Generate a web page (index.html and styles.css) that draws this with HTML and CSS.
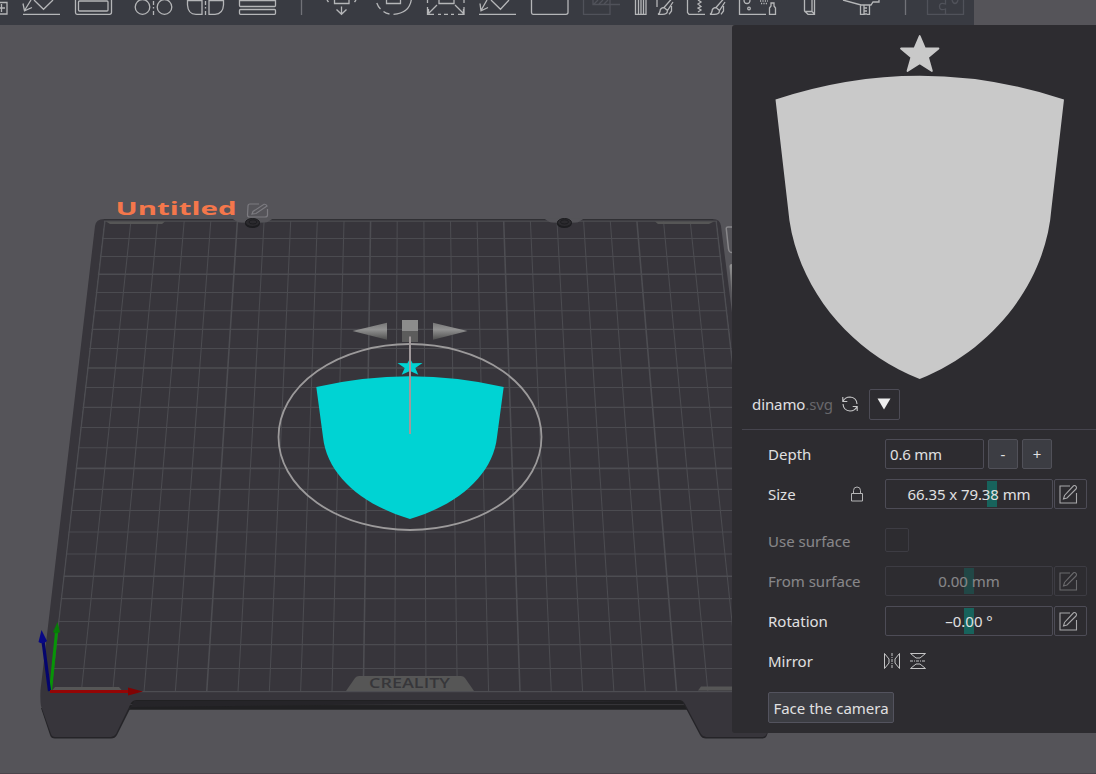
FILE: index.html
```html
<!DOCTYPE html>
<html lang="en">
<head>
<meta charset="utf-8">
<title>Untitled</title>
<link rel="stylesheet" href="styles.css">
</head>
<body>
<main class="app">
<svg class="scene" viewBox="0 0 1096 774" width="1096" height="774">
  <defs>
    <clipPath id="bed"><path d="M104 220.500H717L771 692.500H50Z"/></clipPath>
    <linearGradient id="cone" x1="0" y1="0" x2="0" y2="1"><stop offset="0" stop-color="#777"/><stop offset=".4" stop-color="#929292"/><stop offset="1" stop-color="#4e4e4e"/></linearGradient>
    <linearGradient id="fade" x1="0" y1="0" x2="0" y2="1"><stop offset="0" stop-color="#929292"/><stop offset="1" stop-color="#58575b"/></linearGradient>
  </defs>
  <!-- build plate -->
  <path class="underside" d="M125 700H690V709.800H125Z"/>
  <path d="M125 704.600H690" stroke="#38373b"/>
  <path class="plate-edge" d="M41 708L50 735Q51 738.500 55 738.500H111Q115 738.500 117 735L134 701H682L700 735Q702 738.500 706 738.500H762Q766 738.500 767 735L780 700Z"/>
  <path class="plate" d="M95 226Q96 219 104 219H233Q237 222.500 242 222.500H263Q268 222.500 272 219H545Q549 222.500 554 222.500H575Q579 222.500 583 219H713Q720 219 721 226L780 690V708L767 733Q766 737 762 737H706Q703 737 701 734L685 704Q683 700 679 700H137Q133 700 131 703L116 734Q114 737 111 737H55Q52 737 51 734L41 706Q40 700 40.500 690Z"/>
  <path d="M104 219.500H233M272 219.500H545M583 219.500H713" stroke="#303034"/>
  <g clip-path="url(#bed)" class="grid">
    <path d="M130.900 221L81.300 692M157.600 221L112.700 692M184.200 221L144 692M210.800 221L175.300 692M264.100 221L238 692M290.700 221L269.300 692M317.300 221L300.600 692M344 221L332 692M397.200 221L394.600 692M423.900 221L426 692M450.500 221L457.300 692M477.100 221L488.600 692M530.400 221L551.300 692M557 221L582.600 692M583.600 221L613.900 692M610.300 221L645.300 692M663.500 221L707.900 692M690.200 221L739.300 692"/>
    <path d="M40 238.500H780M40 256.500H780M40 292.500H780M40 310.800H780M40 329.400H780M40 348.500H780M40 387.500H780M40 407.400H780M40 427.500H780M40 447.700H780M40 489.400H780M40 510.500H780M40 532H780M40 554H780M40 598.600H780M40 621.500H780M40 644.600H780M40 668.500H780"/>
    <path class="major" d="M104.800 221L50.500 692M237.400 221L206.700 692M370.600 221L363.300 692M503.700 221L520 692M636.900 221L676.600 692M716.300 221L770 692M40 221H780M40 274.300H780M40 368H780M40 468.400H780M40 576.300H780M40 691.800H780"/>
  </g>
  <path class="notch" d="M233 218.500L238 222.300H267L272 218.500ZM545 218.500L550 222.300H578L583 218.500Z"/>
  <path class="tab" d="M106 221.500H165L162 224H110ZM655 221.500H714L709 224H658ZM55 687H119L122 690.500H52ZM701 686.500H770V690.500H698Z"/>
  <path class="tab" d="M346 691L355 678Q356.500 676 359 676H461Q463.500 676 465 678L474 691Z"/>
  <text class="brand" x="369" y="688" textLength="81" lengthAdjust="spacingAndGlyphs">CREALITY</text>
  <g class="screw"><ellipse cx="252.500" cy="223.500" rx="7.500" ry="4.500"/><ellipse cx="564.300" cy="223.500" rx="7.500" ry="4.500"/><path d="M245.500 222.500a7 4 0 0 1 14 0a7 4 0 0 1-14 0M249 222a4 2.200 0 0 1 8 0a4 2 0 0 1-8 0M557.500 222.500a7 4 0 0 1 14 0a7 4 0 0 1-14 0M560.500 222a4 2.200 0 0 1 8 0a4 2 0 0 1-8 0"/></g>
  <text class="plate-name" x="115.500" y="214.500" textLength="121" lengthAdjust="spacingAndGlyphs">Untitled</text>
  <g fill="none" stroke="#7c7b80" stroke-width="1.200"><path d="M259 204H250Q248 204 248 206L247.500 215Q247.500 217 249.500 217H265Q267.500 217 267.500 215V209M252 214L253 211.500L264 204.300Q266 204 267 206L256 213.500Z"/></g>
  <path d="M732 227H728Q726 227 726.300 229L728.500 249Q729 252.500 732 252.500" fill="none" stroke="#88878a" stroke-width="1.500"/>
  <path d="M729.500 266Q729.500 264 732 264V300Z" fill="url(#fade)"/>
  <!-- model -->
  <path class="model" d="M316.300 387Q410 365.500 503.700 387L497 437C493 474 460 504 410 519C360 504 327 474 323 437Z"/>
  <path class="model" d="M410 358.500L412.600 363.300L422.500 363.100L415.300 368L418.300 374.800L410 371L401.700 374.800L404.700 368L397.500 363.100L407.400 363.300Z"/>
  <!-- rotation gizmo -->
  <ellipse cx="410" cy="437" rx="131.500" ry="93" fill="none" stroke="#9c9a9b" stroke-width="1.800"/>
  <path d="M352.500 331L387 322.800V339.800Z" fill="url(#cone)"/><path d="M467.500 331L433 322.800V339.800Z" fill="url(#cone)"/>
  <path d="M402 320H418V331H402Z" fill="#8c8c8c"/><path d="M402 331H418V342H402Z" fill="#5c5c5c"/>
  <path d="M410 336.500V434" stroke="#a0999b" stroke-width="2"/>
  <!-- axes -->
  <path d="M50.500 691L56.500 632" stroke="#079407" stroke-width="3"/><path d="M57.500 622L60 632Q56.500 634.500 53 632Z" fill="#087c08"/>
  <path d="M49.500 691L43 641" stroke="#05056d" stroke-width="3.200"/><path d="M41.500 630L47 641Q43 645 38.500 642Z" fill="#080886"/>
  <path d="M50 691.500H129" stroke="#940505" stroke-width="3.200"/><path d="M128 687.500L143 691.500L128 695.500Z" fill="#800303"/>
  <path d="M0 773.500H1096" stroke="#4b444b"/>
</svg>
<header class="toolbar">
<svg viewBox="0 0 974 25" width="974" height="25">
  <g class="tool">
    <path d="M-4 2.500H7V14H-4M-1 8H5M1.500 4V12"/>
    <path d="M23 14.300H60M34 0L43.500 9.300L53 0M31 0L24.500 10.500M23 3.500L24.500 10.800L32 7.500"/>
    <path d="M75.500 -2V12.500Q75.500 14.300 77 14.300H109.500Q111.500 14.300 111.500 12.500V-2"/><rect x="78.500" y="1" width="29.500" height="10" rx="1"/>
    <circle cx="142.500" cy="7" r="7.300"/><circle cx="164.500" cy="7" r="7.300"/><path d="M153.500 1V5M153.500 7V8.500M153.500 11V15"/>
    <path d="M187.500 -2V5Q188 14.300 196 14.300H202V-2M187.500 .5H202M205.500 1V5M205.500 7V8.500M205.500 11V15M209 -2V14.300H215Q223 14 223.500 5V-2M209 .5H223.500"/>
    <rect x="239.500" y="-3" width="36" height="9.500" rx="1"/><path d="M240 .5H275"/><rect x="239.500" y="9.500" width="36" height="4.800" rx="1"/>
    <path d="M301.500 0V15" stroke="#717278"/>
    <path d="M334.500 -2V3.500H349V-2M341.500 6.500V14M336.500 9.500L341.500 14.300L346.500 9.500M327 0L328.500 2M356 0L354.500 2"/>
    <path d="M386.500 -2V3.500H400.500V-2M411.300 0Q409 13.500 393.500 14.300M389.500 14Q386 13.500 383.500 11.500M380.500 9Q378 6.500 376.800 3"/>
    <path d="M439 -2V3.500H454V-2M427.500 0V3M427.500 7V14.300H434M438 14.300H441M444 14.300H448M451 14.300H454M458 14.300H464V7M464 3V0M437 5L428.500 13.500M428.500 9V13.500M455 5L463.500 13.500M463.500 9V13.500"/>
    <path d="M479 14.300H516M491 0L500.500 9.300L509 0M487 0L481 10.500M480 3.500L481 10.800L488 7.500"/>
    <path d="M531.500 -2V12.500Q531.500 14.300 533 14.300H566Q568 14.300 568 12.500V-2"/>
    <g class="disabled"><path d="M583.500 -2V14.300H610V-2M593 -2V4.500H620M594 4L598 0M599 4L603 0M604 4L608 0"/></g>
    <path d="M635.500 -2V14.300H646V-2M638.500 0V14M641 0V14M643.500 0V14"/>
    <path d="M657 0V7M671.500 -1L664 7.500L667.500 10.500L673 2M664 7.500Q660 8 660 11.500Q659.500 13.500 658 14.300H662Q667.500 14.500 667.500 10.500M671.500 6V11L669 14.300"/>
    <path d="M687.500 -2V12.500L689 14.300H705M698 0L701 2L698 4L701 6.500L698 8L701 10L698 12M723.500 -1L716 7.500L719.500 10.500L725 2M716 7.500Q712 8 712 11.500Q711.500 13.500 710 14.300H714Q719.500 14.500 719.500 10.500M723.500 6V11L721 14.300"/>
    <path d="M739.500 -2V14.300H766M744 0Q744 3.500 747 3.500T750 0M769.500 8L771 6V3H774V6L775.500 8V14.300H769.500Z"/><circle cx="749" cy="8.500" r="1.300"/><path d="M760 1H768M761 3.500H768" stroke-dasharray="1.200 1.200"/>
    <path d="M804.500 -2V11L808 14.300H814.500V0M804.500 11.500H812V-2M812 11.500L814.500 14"/>
    <path d="M843 0L861 5H871L873 2H879V0M860.500 5V14.300H864V5M867 14.300H869.500V5M864 8H867M864 11H867M864 14H867"/>
    <path d="M905.500 0V15" stroke="#717278"/>
    <g class="disabled"><path d="M927.500 -2V14.300H963.500V-2M945.500 14V9Q939.500 11 939.500 6.500T945.500 4V0M952 0Q953 3.500 955 3.500T958 0"/></g>
  </g>
</svg>
</header>
<aside class="panel">
  <div class="preview">
    <svg viewBox="732 25 364 360" width="364" height="360">
      <path d="M775.500 99.500Q919.700 52 1064 99.500L1051.500 208C1046 284 991 351 919.700 379C848 351 794 284 788 208Z" fill="#c9c9c9"/>
      <path d="M919.700 36L924.800 48.200L938.500 48.500L928 57.200L931.900 71L919.700 63.300L907.500 71L911.400 57.200L901 48.500L914.600 48.200Z" fill="#c9c9c9" stroke="#c9c9c9" stroke-width="1.800" stroke-linejoin="round"/>
    </svg>
  </div>
  <div class="file">
    <span class="file-name">dinamo<span class="ext">.svg</span></span>
    <svg class="refresh" viewBox="0 0 18 18" width="18" height="18"><path d="M2 6.500Q4 2 9 2Q15.500 2.500 16 9M16 11.500Q14 16 9 16Q2.500 15.500 2 9M1.800 2V6.500H6.300M16.200 16V11.500H11.700"/></svg>
    <button class="drop"><svg viewBox="0 0 14 12" width="14" height="12"><path d="M.5 .5H13.500L7 11.500Z" fill="#eee"/></svg></button>
  </div>
  <div class="form">
    <div class="row"><span class="label">Depth</span><span class="box depth">0.6 mm</span><button class="step">-</button><button class="step">+</button></div>
    <div class="row"><span class="label">Size<svg class="lock" viewBox="0 0 12 16" width="12" height="16"><path d="M.5 7.500H11.500V15H.5ZM2.500 7V4.500Q2.500 1 6 1T9.500 4.500V7"/></svg></span><span class="box slider size-value"><i class="thumb"></i><span>66.35 x 79.38 mm</span></span><button class="edit"><svg viewBox="0 0 20 20" width="20" height="20"><path d="M12 2H2V19H18.500V9M5.500 15L6.500 11.500L15.500 1.800Q17 1 18.200 2.600Q19 4 18 5L9 14Z"/></svg></button></div>
    <div class="row off surface"><span class="label">Use surface</span><span class="check"></span></div>
    <div class="row off"><span class="label">From surface</span><span class="box slider"><i class="thumb"></i><span>0.00 mm</span></span><button class="edit"><svg viewBox="0 0 20 20" width="20" height="20"><path d="M12 2H2V19H18.500V9M5.500 15L6.500 11.500L15.500 1.800Q17 1 18.200 2.600Q19 4 18 5L9 14Z"/></svg></button></div>
    <div class="row"><span class="label">Rotation</span><span class="box slider"><i class="thumb"></i><span>–0.00 °</span></span><button class="edit"><svg viewBox="0 0 20 20" width="20" height="20"><path d="M12 2H2V19H18.500V9M5.500 15L6.500 11.500L15.500 1.800Q17 1 18.200 2.600Q19 4 18 5L9 14Z"/></svg></button></div>
    <div class="row"><span class="label">Mirror</span>
      <span class="mirror"><svg viewBox="0 0 16 16" width="16" height="16"><path d="M.5 .5V15.500L5 10V6ZM15.500 .5V15.500L11 10V6Z"/><path d="M8 0V16" stroke-dasharray="3 1 1 1"/></svg><svg viewBox="0 0 16 16" width="16" height="16"><path d="M.5 .5H15.500L10 5H6ZM.5 15.500H15.500L10 11H6Z"/><path d="M0 8H16" stroke-dasharray="3 1 1 1"/></svg></span></div>
    <button class="face">Face the camera</button>
  </div>
</aside>
</main>
</body>
</html>
```
FILE: styles.css
```css
* { box-sizing: border-box; }
body { margin: 0; background: #555459; font: 16px "Noto Sans", sans-serif; color: #e0e0e1; overflow: hidden; }
button { font: inherit; color: inherit; padding: 0; }
.app { position: relative; width: 1096px; height: 774px; overflow: hidden; }
.scene { display: block; background: #555459; }
.plate { fill: #37353b; }
.plate-edge { fill: #252428; }
.underside { fill: #202022; }
.notch { fill: #555459; }
.grid path { fill: none; stroke: #4b4b50; stroke-width: 1.100; }
.grid .major { stroke-width: 1.600; stroke: #4d4d52; }
.tab { fill: #565656; }
.brand { font: 600 13.500px "Open Sans", sans-serif; fill: #37363a; }
.plate-name { font: bold 17px "Open Sans", sans-serif; fill: #f4774b; }
.screw ellipse { fill: #1d1d20; }
.screw path { fill: #2b2a2e; stroke: #1d1d20; }
.model { fill: #00d3d3; }
.toolbar { position: absolute; top: 0; left: 0; width: 974px; height: 25px; background: #393b42; }
.toolbar svg { display: block; }
.tool { fill: none; stroke: #b5b6b8; stroke-width: 1.300; }
.disabled { stroke: #50525a; }
.panel { position: absolute; top: 25px; right: 0; width: 364px; height: 708px; background: #2d2c30; border-radius: 3px 0 0 3px; }
.preview { height: 360px; }
.preview svg { display: block; }
.file { display: flex; align-items: center; height: 45px; margin-left: 10px; padding: 0 0 6px 10px; border-bottom: 1px solid #45444d; }
.file-name { width: 80px; font-size: 15px; letter-spacing: -.1px; white-space: nowrap; }
.ext { color: #68676b; }
.refresh { margin-left: 9px; fill: none; stroke: #c8c8c9; stroke-width: 1.100; }
.drop { display: grid; place-items: center; width: 31px; height: 31px; margin-left: 10px; padding-right: 2px; background: none; border: 1px solid #4d4c56; border-radius: 2px; }
.form { display: flex; flex-direction: column; align-items: flex-start; gap: 10px; padding: 9px 0 0 36px; font-size: 15px; }
.row { display: flex; align-items: center; height: 30px; }
.surface { margin-top: 7px; }
.label { display: flex; align-items: center; justify-content: space-between; width: 117px; padding-right: 22px; white-space: nowrap; }
.lock { fill: none; stroke: #b5b5b6; }
.box { position: relative; height: 30px; border: 1px solid #4d4c56; border-radius: 2px; line-height: 28px; }
.depth { width: 99px; padding-left: 4px; margin-right: 4px; letter-spacing: -.2px; }
.slider { width: 168px; text-align: center; }
.slider span { position: relative; }
.size-value { letter-spacing: -.08px; }
.thumb { position: absolute; left: 78px; top: 1px; width: 10px; height: 26px; background: #17635c; }
.size-value .thumb { left: 101px; }
.step { width: 30px; height: 30px; margin-right: 4px; background: #3c3d43; border: 1px solid #515159; border-radius: 2px; }
.edit { display: grid; place-items: center; width: 33px; height: 30px; margin-left: 1px; padding: 0 6px 1px 0; background: none; border: 1px solid #4d4c56; border-radius: 2px; }
.edit svg { fill: none; stroke: #a8a8aa; stroke-width: 1.100; }
.off { opacity: .5; }
.check { width: 24px; height: 24px; border: 1px solid #4d4c56; border-radius: 2px; margin-top: -3px; }
.mirror { display: flex; gap: 10px; fill: none; stroke: #c5c5c6; margin: -1px 0 0 -1px; }
.face { width: 126px; height: 31px; margin-top: 6px; background: #3c3d43; border: 1px solid #53535e; border-radius: 2px; white-space: nowrap; }
```
